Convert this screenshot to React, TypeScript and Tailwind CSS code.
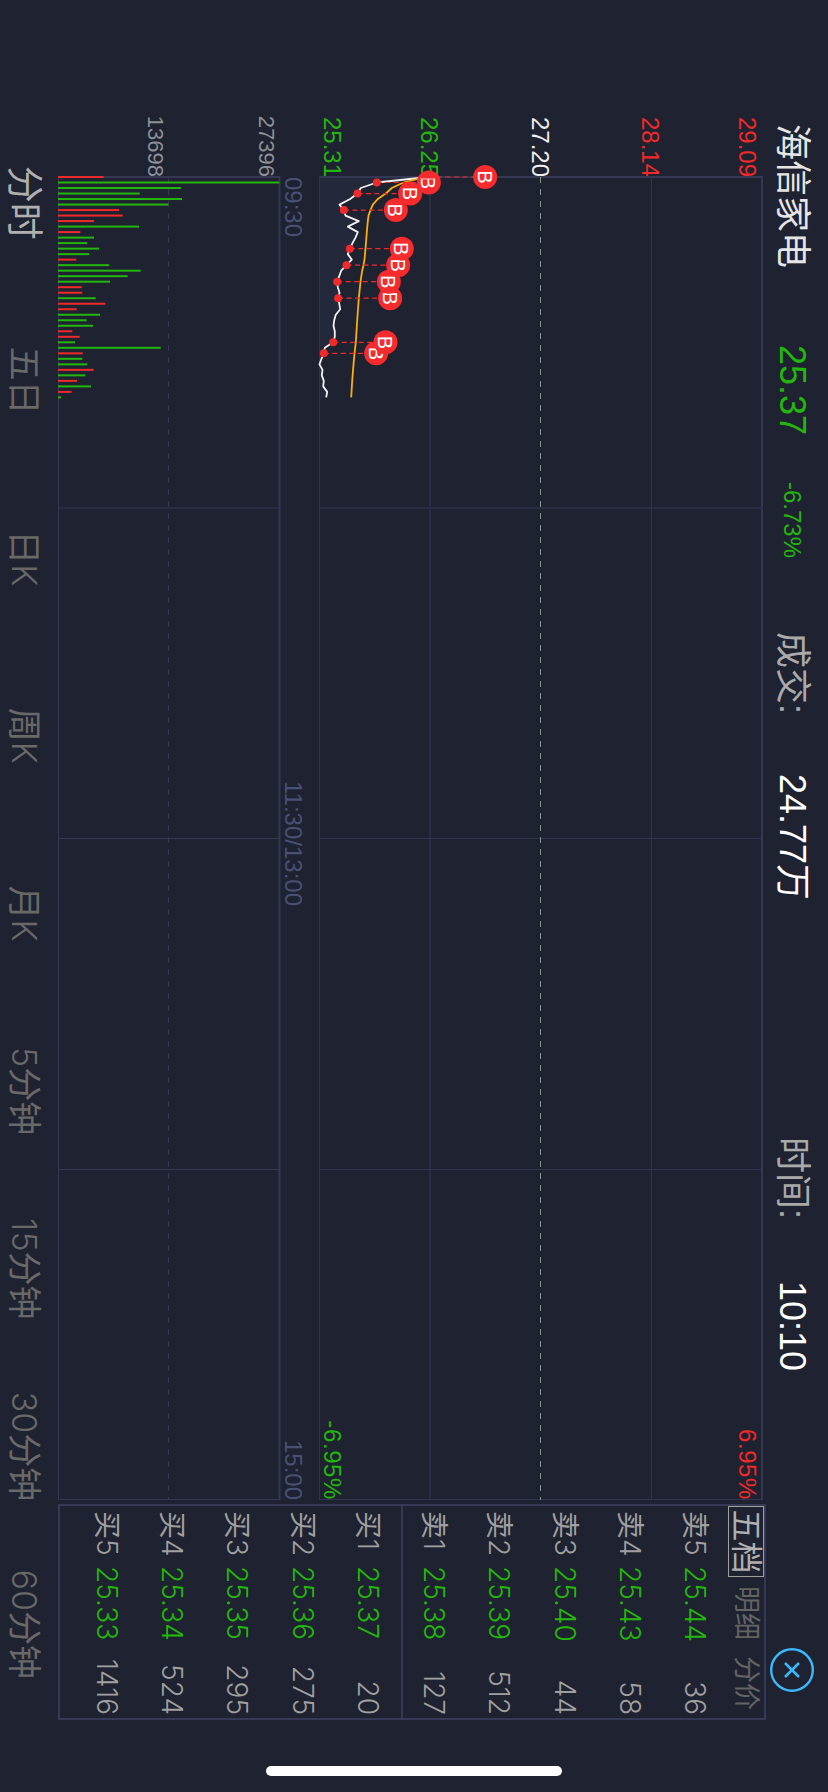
import React from "react";

const FLOOR = 508.5;
const X0 = 177;
const STEP = 5.51;
const VOL_FLOOR = 770;

// Per-minute heights above the price floor, in thirds of a pixel.
const price = [
  327, 172, 124, 114, 92, 60, 73, 78, 118, 85, 115, 108, 99, 91, 85, 97, 81, 65, 59, 53, 55, 60, 56, 59, 62, 49, 44,
  42, 46, 46, 41, 16, 13, 6, 0, 9, 7, 13, 11, 23, 20,
];

const average: [number, number][] = [
  [0, 327], [0.4, 292], [1, 252], [2, 217], [3, 199], [4, 175], [5, 160], [6, 153], [7, 147], [8, 145], [10, 142],
  [13, 138], [15, 135], [16, 132], [17, 128], [19, 123], [22, 118], [26, 113], [30, 109], [32, 105], [34, 102],
  [37, 98], [40, 95],
];

const buys: [number, number][] = [
  [0, 497], [1, 328], [3, 272], [6, 229], [13, 247], [16, 236], [19, 208], [22, 212], [30, 198], [32, 170],
];

const volume: [string, number][] = [
  ["r", 137], ["g", 664], ["g", 369], ["g", 245], ["g", 372], ["g", 331], ["r", 183], ["r", 194], ["r", 108],
  ["g", 243], ["r", 67], ["g", 108], ["g", 88], ["g", 123], ["g", 94], ["r", 55], ["g", 153], ["g", 248],
  ["g", 209], ["g", 156], ["r", 71], ["r", 73], ["g", 113], ["r", 142], ["r", 56], ["g", 126], ["g", 86],
  ["g", 105], ["r", 43], ["r", 65], ["g", 51], ["g", 308], ["r", 74], ["g", 73], ["g", 88], ["r", 107],
  ["g", 82], ["r", 57], ["g", 99], ["r", 41], ["g", 9],
];

const book: [string, string, string][] = [
  ["卖5", "25.44", "36"],
  ["卖4", "25.43", "58"],
  ["卖3", "25.40", "44"],
  ["卖2", "25.39", "512"],
  ["卖1", "25.38", "127"],
  ["买1", "25.37", "20"],
  ["买2", "25.36", "275"],
  ["买3", "25.35", "295"],
  ["买4", "25.34", "524"],
  ["买5", "25.33", "1416"],
];

const periods = ["分时", "五日", "日K", "周K", "月K", "5分钟", "15分钟", "30分钟", "60分钟"];

const px = (m: number) => X0 + m * STEP;
const py = (h: number) => FLOOR - h / 3;
const line = price.map((h, m) => `${px(m).toFixed(1)},${py(h).toFixed(1)}`).join(" ");
const avgLine = average.map(([m, h]) => `${px(m).toFixed(1)},${py(h).toFixed(1)}`).join(" ");

// Latin characters stay light while Chinese ones take the regular weight.
function Mixed({ text }: { text: string }) {
  return (
    <>
      {text.split(/([\u4e00-\u9fff]+)/).map((part, i) =>
        i % 2 ? (
          <span key={i} className="font-normal">
            {part}
          </span>
        ) : (
          part
        ),
      )}
    </>
  );
}

function Chart() {
  return (
    <svg className="absolute inset-0 overflow-visible" width="1324" height="708" viewBox="176 62 1324 708">
      <polygon points={`${X0},${FLOOR} ${line} ${px(40)},${FLOOR}`} fill="#24283b" />
      <g stroke="#353852" fill="none">
        <path d="M176 66H1500M177 65V509" strokeWidth="2" />
        <path d="M176 398H1500M508 66V509" strokeWidth="2" stroke="#292c42" />
        <path d="M176 176.5H1500M176 508.5H1500M838.5 66V509M1169.5 66V509M1499.5 66V509" stroke="#313450" />
        <path d="M176 548.5H1500M177 548V770" strokeWidth="2" />
        <path d="M508 549V770" strokeWidth="2" stroke="#292c42" />
        <path d="M176 769.5H1500M838.5 549V770M1169.5 549V770M1499.5 549V770" stroke="#353852" />
        <path d="M177 659.5H1500" strokeDasharray="6 6" stroke="#353852" />
        <path d="M177 287.5H1500" strokeDasharray="6 6" stroke="#7d9a80" />
      </g>
      {volume.map(([c, h], m) => (
        <rect
          key={m}
          x={px(m) - 1}
          y={VOL_FLOOR - h / 3}
          width="2"
          height={h / 3}
          fill={c === "r" ? "#f02a2b" : "#23b70d"}
        />
      ))}
      <polyline points={line} fill="none" stroke="#f2f2f2" strokeWidth="1.8" strokeLinejoin="round" />
      <polyline points={avgLine} fill="none" stroke="#fcae0d" strokeWidth="1.8" strokeLinejoin="round" />
      {buys.map(([m, h]) => (
        <g key={m}>
          <line
            x1={px(m)}
            x2={px(m)}
            y1={py(price[m])}
            y2={py(h)}
            stroke="#f02a2b"
            strokeWidth="1.2"
            strokeDasharray="5 3.5"
          />
          {m > 0 && <circle cx={px(m)} cy={py(price[m])} r="4" fill="#f02a2b" />}
        </g>
      ))}
      {[...buys].reverse().map(([m, h]) => (
        <g key={m}>
          <circle cx={px(m)} cy={py(h)} r="12" fill="#f52b2d" />
          <text
            x={px(m)}
            y={py(h) + 7.5}
            textAnchor="middle"
            fill="#fff"
            className="font-['Liberation_Sans',sans-serif] text-[20px]"
          >
            B
          </text>
          {m === 1 && <rect x={px(m) - 6.5} y={py(h) - 8} width="2.6" height="16" fill="#f52b2d" />}
        </g>
      ))}
    </svg>
  );
}

export default function App() {
  return (
    <div className="h-[1792px] w-[828px] overflow-hidden bg-[#1f2230]">
      <div className="relative flex h-[828px] w-[1792px] origin-top-left translate-x-[828px] rotate-90 flex-col whitespace-nowrap bg-[#1f2230] font-['Liberation_Sans','Noto_Sans_CJK_SC',sans-serif]">
        <header className="flex h-[62px] shrink-0 items-center pl-[124px] pt-[10px] text-4xl leading-[44px]">
          <span className="w-[221px] text-[#e6e6e6]">海信家电</span>
          <span className="w-[137px] text-[#23b70d]">25.37</span>
          <span className="w-[150px] text-2xl text-[#23b70d]">-6.73%</span>
          <span className="w-[142px] text-[#aaaaaa]">成交:</span>
          <span className="w-[363px] text-white">24.77万</span>
          <span className="w-[144px] text-[#aaaaaa]">时间:</span>
          <span className="w-[367px] text-white">10:10</span>
          <svg className="shrink-0" width="44" height="44" viewBox="0 0 44 44" fill="none" stroke="#3cb9fd">
            <circle cx="22" cy="22" r="20.8" strokeWidth="2.4" />
            <path d="M15 15L29 29M29 15L15 29" strokeWidth="2.6" />
          </svg>
        </header>

        <main className="flex h-[708px] shrink-0">
          <div className="flex w-[176px] shrink-0 flex-col items-end pt-[7px] text-2xl leading-6">
            <span className="-mr-px h-[97px] text-[#f02a2b]">29.09</span>
            <span className="-mr-px h-[110px] text-[#f02a2b]">28.14</span>
            <span className="-mr-px h-[111px] text-[#eeeeee]">27.20</span>
            <span className="-mr-px h-[97px] text-[#23b70d]">26.25</span>
            <span className="-mr-px h-[66px] text-[#23b70d]">25.31</span>
            <span className="-mr-px h-[111px] text-[22px] text-[#8d9098]">27396</span>
            <span className="-mr-px text-[22px] text-[#8d9098]">13698</span>
          </div>

          <div className="relative w-[1324px] shrink-0 text-2xl leading-6">
            <Chart />
            <div className="relative flex h-[461px] flex-col items-end justify-between pb-[15px] pt-[7px] tracking-[0.6px]">
              <span className="text-[#f02a2b]">6.95%</span>
              <span className="text-[#23b70d]">-6.95%</span>
            </div>
            <div className="relative grid grid-cols-3 text-[#4a5074]">
              <span className="pl-px">09:30</span>
              <span className="pl-[11px] text-center">11:30/13:00</span>
              <span className="text-right">15:00</span>
            </div>
          </div>

          <aside className="ml-1 flex w-[216px] shrink-0 flex-col border-2 border-[#363956] pb-[14px] font-['Inter','Noto_Sans_CJK_SC',sans-serif] font-light text-[#a0a0a0]">
            <div className="flex h-9 shrink-0 items-center text-[27px] font-normal leading-9 text-[#646464]">
              <span className="flex h-9 w-[71px] items-center justify-center border border-[#a0a0a0] text-[32px] text-[#b0b0b0]">
                五档
              </span>
              <span className="ml-[9px]">明细</span>
              <span className="ml-[16px]">分价</span>
            </div>
            {book.map(([label, value, amount], i) => (
              <div
                key={label}
                className={
                  i === 5
                    ? "-mt-px flex flex-1 items-center border-t-2 border-[#363956] pl-[5px] pr-[3px] text-[28px] leading-8"
                    : "flex flex-1 items-center pl-[5px] pr-[3px] text-[28px] leading-8"
                }
              >
                <span className="w-[55px]">
                  <Mixed text={label} />
                </span>
                <span className="text-[#23b70d]">{value}</span>
                <span className="ml-auto">{amount}</span>
              </div>
            ))}
          </aside>
        </main>

        <nav className="ml-[114px] grid h-[58px] w-[1599px] grid-cols-9 items-center pt-[10px] text-center font-['Inter','Noto_Sans_CJK_SC',sans-serif] text-[34px] font-light leading-[48px] text-[#696969]">
          {periods.map((p, i) => (
            <span key={p} className={i === 0 ? "text-[37px] text-[#b0b0b0]" : ""}>
              <Mixed text={p} />
            </span>
          ))}
        </nav>

        <div className="absolute left-[1766px] top-[266px] h-[296px] w-[10px] rounded-full bg-white" />
      </div>
    </div>
  );
}
